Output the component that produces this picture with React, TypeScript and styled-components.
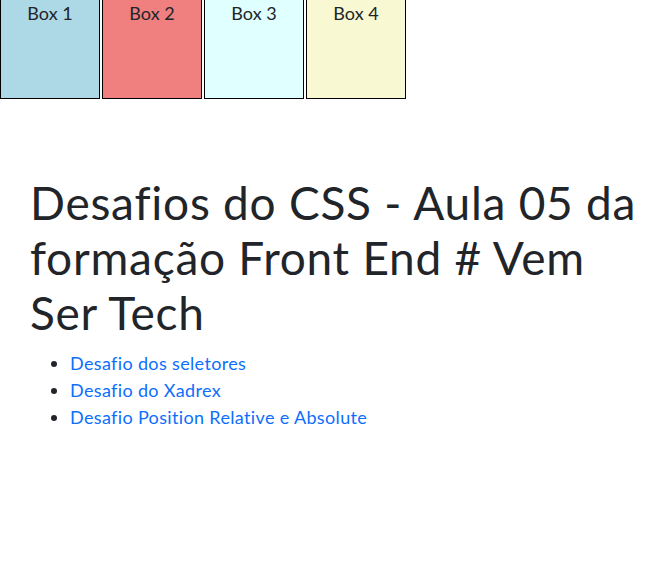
import React from "react";
import styled, { createGlobalStyle } from "styled-components";

const Global = createGlobalStyle`
  html, body { margin: 0; padding: 0; background: #fff; }
  body { font-family: Lato, "Open Sans", sans-serif; color: #212529; }
`;

const BoxRow = styled.div`
  display: flex;
  gap: 2px;
`;

const Box = styled.div<{ $bg: string }>`
  box-sizing: border-box;
  width: 100px;
  height: 99px;
  border: 1px solid #000;
  border-top: 0;
  background: ${(p) => p.$bg};
  text-align: center;
  font-size: 18px;
  line-height: 27px;
  color: #212529;
`;

const Main = styled.main`
  padding: 76px 0 0 30px;
`;

const Title = styled.h1`
  margin: 0;
  width: 625px;
  font-size: 46px;
  font-weight: 400;
  line-height: 55px;
  letter-spacing: 0.75px;
  color: #212529;
`;

const List = styled.ul`
  margin: 10px 0 0;
  padding-left: 40px;
  font-size: 18px;
  line-height: 27px;
  letter-spacing: 0.35px;
`;

const Link = styled.a`
  color: #0d6efd;
  text-decoration: none;
`;

const boxes = [
  { label: "Box 1", bg: "#add8e6" },
  { label: "Box 2", bg: "#f08080" },
  { label: "Box 3", bg: "#e0ffff" },
  { label: "Box 4", bg: "#f8f9d2" },
];

export default function App() {
  return (
    <>
      <Global />
      <BoxRow>
        {boxes.map((b) => (
          <Box key={b.label} $bg={b.bg}>
            {b.label}
          </Box>
        ))}
      </BoxRow>
      <Main>
        <Title>Desafios do CSS - Aula 05 da formação Front End # Vem Ser Tech</Title>
        <List>
          <li><Link href="#">Desafio dos seletores</Link></li>
          <li><Link href="#">Desafio do Xadrex</Link></li>
          <li><Link href="#">Desafio Position Relative e Absolute</Link></li>
        </List>
      </Main>
    </>
  );
}
